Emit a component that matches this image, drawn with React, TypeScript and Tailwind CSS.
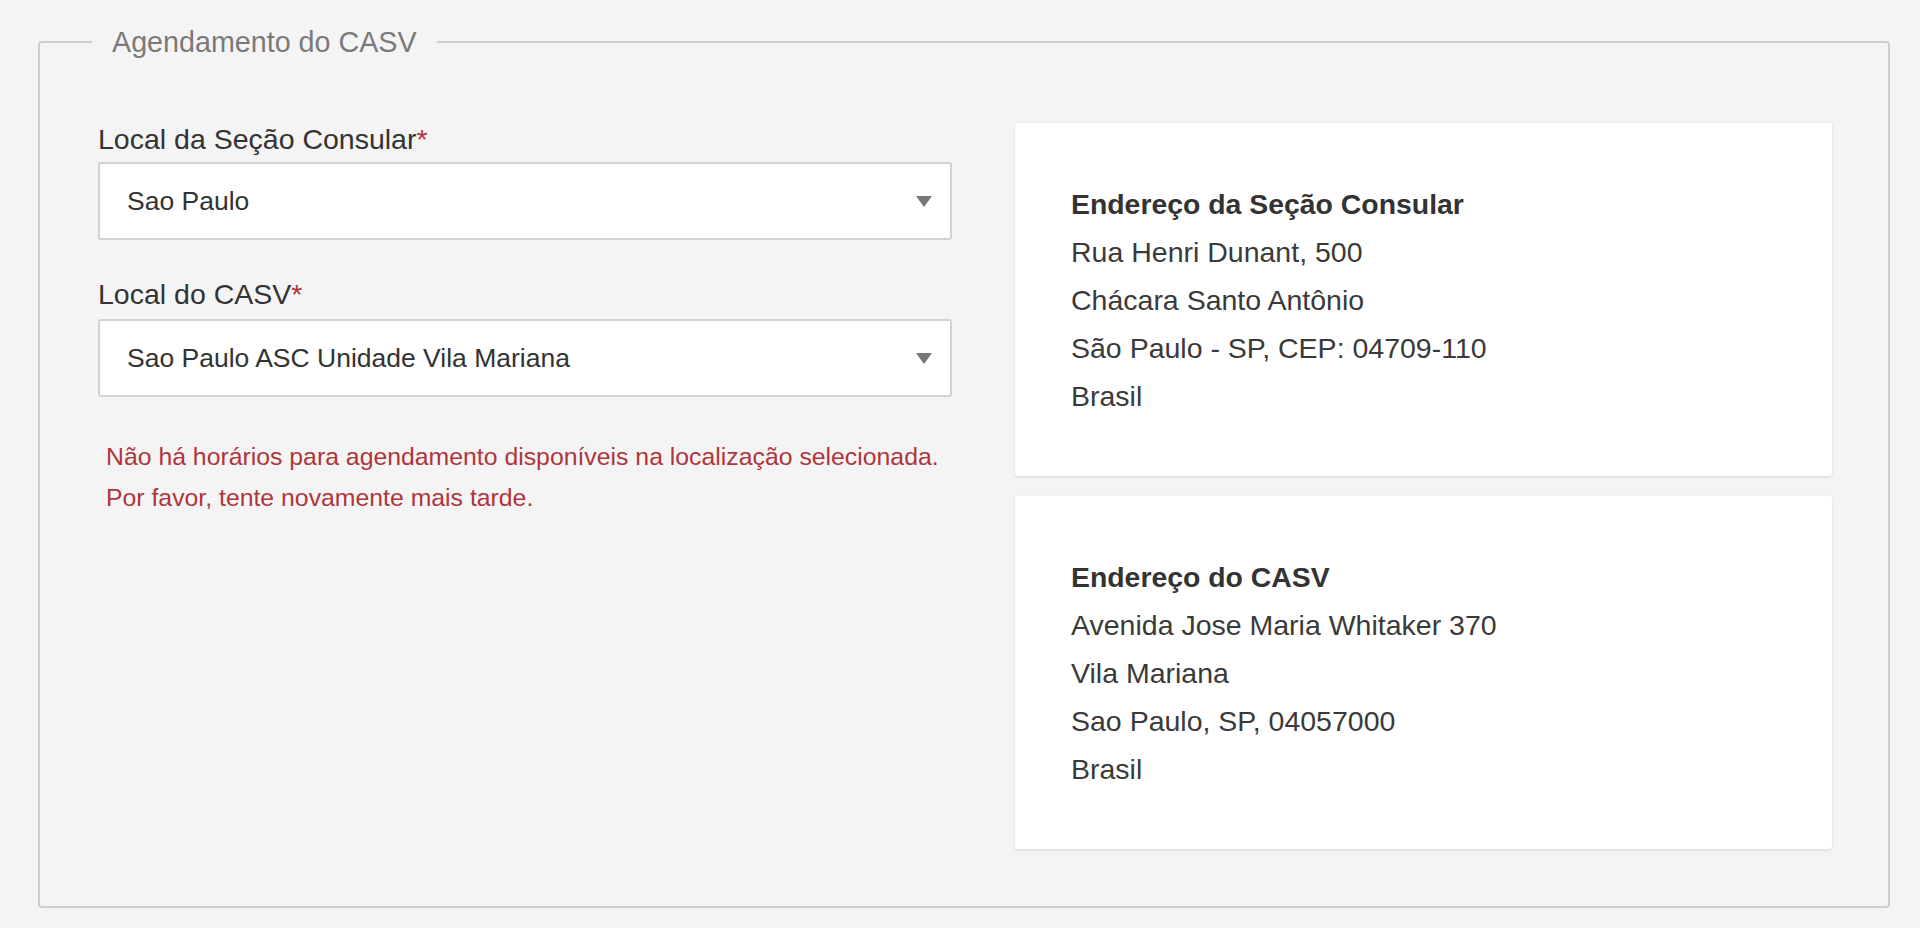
import React from 'react';

const font = "font-['Liberation_Sans','Helvetica_Neue',Arial,sans-serif]";

function SelectBox({ value }: { value: string }) {
  return (
    <div className="flex h-[78px] items-center justify-between rounded-[3px] border-2 border-[#d2d2d2] bg-white pl-[27px] pr-[18px]">
      <span className="text-[26.5px] leading-none text-[#333333]">{value}</span>
      <svg width="16" height="11" viewBox="0 0 16 11" className="shrink-0">
        <polygon points="0,0 16,0 8,11" fill="#777777" />
      </svg>
    </div>
  );
}

function AddressCard({ title, lines }: { title: string; lines: string[] }) {
  return (
    <div className="rounded-[3px] bg-white pt-[57px] pb-[56px] pl-[56px] pr-6 shadow-[0_1px_3px_rgba(0,0,0,0.12)]">
      <div className="text-[28.4px] font-bold leading-[48px] text-[#333333]">{title}</div>
      {lines.map((line) => (
        <div key={line} className="text-[28.5px] leading-[48px] text-[#3a3a3a]">
          {line}
        </div>
      ))}
    </div>
  );
}

export default function App() {
  return (
    <div className={`min-h-screen bg-[#f4f4f4] pt-[25px] pl-[38px] pr-[30px] ${font}`}>
      <fieldset className="rounded-[4px] border-2 border-[#cdcdcd] pr-[56px] pl-[58px] pt-[64px] pb-[57px]">
        <legend className="ml-[-6px] px-[20px] text-[28.7px] leading-[34px] text-[#7a7a7a]">
          Agendamento do CASV
        </legend>

        <div className="flex gap-[63px]">
          {/* left column: selects */}
          <div className="w-[854px] shrink-0">
            <label className="mt-[-1px] block text-[28.5px] leading-[34px] text-[#333333]">
              Local da Seção Consular<span className="text-[#b0343c]">*</span>
            </label>
            <div className="mt-[6px]">
              <SelectBox value="Sao Paulo" />
            </div>

            <label className="mt-[37px] block text-[28.5px] leading-[34px] text-[#333333]">
              Local do CASV<span className="text-[#b0343c]">*</span>
            </label>
            <div className="mt-[8px]">
              <SelectBox value="Sao Paulo ASC Unidade Vila Mariana" />
            </div>

            <p className="mt-[39px] pl-[8px] text-[24.8px] leading-[41px] text-[#b0343c]">
              Não há horários para agendamento disponíveis na localização selecionada.
              <br />
              Por favor, tente novamente mais tarde.
            </p>
          </div>

          {/* right column: addresses */}
          <div className="flex flex-1 flex-col gap-[20px]">
            <AddressCard
              title="Endereço da Seção Consular"
              lines={['Rua Henri Dunant, 500', 'Chácara Santo Antônio', 'São Paulo - SP, CEP: 04709-110', 'Brasil']}
            />
            <AddressCard
              title="Endereço do CASV"
              lines={['Avenida Jose Maria Whitaker 370', 'Vila Mariana', 'Sao Paulo, SP, 04057000', 'Brasil']}
            />
          </div>
        </div>
      </fieldset>
    </div>
  );
}
